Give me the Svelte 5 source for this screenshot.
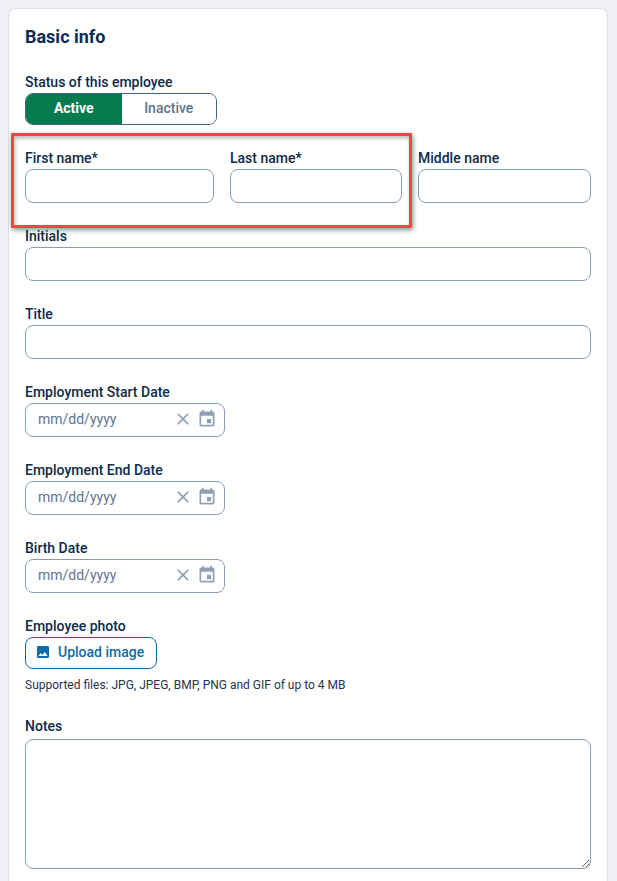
<script>
  let status = $state("active");
  const dates = ["Employment Start Date", "Employment End Date", "Birth Date"];
</script>

<div class="page">
  <section class="card">
    <h2>Basic info</h2>

    <div class="field status">
      <span class="label">Status of this employee</span>
      <div class="toggle">
        <button class:on={status === "active"} onclick={() => (status = "active")}>Active</button>
        <button class:on={status === "inactive"} onclick={() => (status = "inactive")}>Inactive</button>
      </div>
    </div>

    <div class="names field">
      <div class="highlight"></div>
      <div>
        <label for="first">First name*</label>
        <input id="first" type="text" />
      </div>
      <div>
        <label for="last">Last name*</label>
        <input id="last" type="text" />
      </div>
      <div>
        <label for="middle">Middle name</label>
        <input id="middle" type="text" />
      </div>
    </div>

    <div class="field">
      <label for="initials">Initials</label>
      <input id="initials" type="text" />
    </div>

    <div class="field">
      <label for="title">Title</label>
      <input id="title" type="text" />
    </div>

    {#each dates as name}
      <div class="field">
        <span class="label">{name}</span>
        <div class="date">
          <input type="text" placeholder="mm/dd/yyyy" />
          <svg class="clear" viewBox="0 0 24 24" width="20" height="20">
            <path d="M19 6.41L17.59 5 12 10.59 6.41 5 5 6.41 10.59 12 5 17.59 6.41 19 12 13.41 17.59 19 19 17.59 13.41 12z" />
          </svg>
          <svg class="cal" viewBox="0 0 24 24" width="20" height="20">
            <path d="M17 12h-5v5h5v-5zM16 1v2H8V1H6v2H5c-1.11 0-1.99.9-1.99 2L3 19c0 1.1.89 2 2 2h14c1.1 0 2-.9 2-2V5c0-1.1-.9-2-2-2h-1V1h-2zm3 18H5V8h14v11z" />
          </svg>
        </div>
      </div>
    {/each}

    <div class="photo">
      <span class="label">Employee photo</span>
      <button class="upload">
        <svg viewBox="0 0 24 24" width="16" height="16">
          <path d="M21 19V5c0-1.1-.9-2-2-2H5c-1.1 0-2 .9-2 2v14c0 1.1.9 2 2 2h14c1.1 0 2-.9 2-2zM8.5 13.5l2.5 3.01L14.5 12l4.5 6H5l3.5-4.5z" />
        </svg>
        Upload image
      </button>
      <p class="hint">Supported files: JPG, JPEG, BMP, PNG and GIF of up to 4 MB</p>
    </div>

    <div class="notes">
      <label for="notes">Notes</label>
      <textarea id="notes"></textarea>
    </div>
  </section>
</div>

<style>
  :global(html),
  :global(body) {
    overflow: hidden;
    height: 881px;
  }

  :global(body) {
    background: #eef0f5;
    font-family: Roboto, "Liberation Sans", sans-serif;
  }

  .page {
    padding: 8px 9px 0 8px;
  }

  .card {
    background: #fff;
    border: 1px solid #dde1ea;
    border-radius: 8px;
    padding: 16px 16px 40px;
  }

  h2 {
    margin: 0 0 23px;
    font-size: 18px;
    line-height: 24px;
    font-weight: 700;
    color: #0b2c52;
  }

  label,
  .label {
    display: block;
    font-size: 14px;
    line-height: 20px;
    font-weight: 500;
    color: #0c2a4a;
    margin-bottom: 1px;
  }

  input,
  textarea {
    display: block;
    box-sizing: border-box;
    width: 100%;
    height: 34px;
    border: 1px solid #8a9db3;
    border-radius: 8px;
    background: #fff;
    font: inherit;
    font-size: 14px;
    outline: none;
  }

  .field {
    margin-bottom: 23px;
  }

  .toggle {
    display: flex;
    box-sizing: border-box;
    width: 192px;
    height: 32px;
    border: 1px solid #3f6285;
    border-radius: 8px;
    overflow: hidden;
  }

  .toggle button {
    border: none;
    background: #fff;
    color: #5b7590;
    font: inherit;
    font-size: 14px;
    font-weight: 500;
    padding: 0 0 2px;
    width: 95px;
  }

  .toggle button.on {
    background: #047a4f;
    color: #fff;
    font-weight: 700;
    width: 96px;
  }

  .names {
    position: relative;
    display: grid;
    grid-template-columns: 189px 172px 1fr;
    gap: 16px;
  }

  .highlight {
    position: absolute;
    left: -14px;
    top: -15px;
    width: 401px;
    height: 95px;
    box-sizing: border-box;
    border: 3px solid #f44545;
    box-shadow: 1px 2px 5px rgba(0, 0, 0, 0.45), inset 1px 2px 4px rgba(0, 0, 0, 0.3);
    pointer-events: none;
  }

  .date {
    display: flex;
    align-items: center;
    box-sizing: border-box;
    width: 200px;
    height: 34px;
    border: 1px solid #8a9db3;
    border-radius: 8px;
    padding: 0 7px 0 12px;
  }

  .date input {
    flex: 1;
    min-width: 0;
    height: 30px;
    border: none;
    border-radius: 0;
    padding: 0 0 2px;
    color: #51677f;
  }

  .date input::placeholder {
    color: #5f7690;
    opacity: 1;
  }

  .date svg {
    fill: #8fa0b4;
    flex: none;
    margin-bottom: 2px;
  }

  .date .clear {
    margin-right: 4px;
  }

  .upload {
    display: flex;
    align-items: center;
    gap: 7px;
    box-sizing: border-box;
    width: 132px;
    height: 32px;
    border: 1px solid #0b6cad;
    border-radius: 8px;
    background: #fff;
    color: #0b6cad;
    font: inherit;
    font-size: 14px;
    font-weight: 500;
    padding: 0 0 2px 9px;
  }

  .upload svg {
    fill: #0b6cad;
    flex: none;
  }

  .hint {
    margin: 8px 0 0;
    font-size: 12px;
    line-height: 16px;
    color: #1d3550;
  }

  .photo {
    margin-bottom: 23px;
  }

  .notes label {
    margin-bottom: 3px;
  }

  textarea {
    height: 130px;
    resize: vertical;
    padding: 8px 12px;
  }
</style>
